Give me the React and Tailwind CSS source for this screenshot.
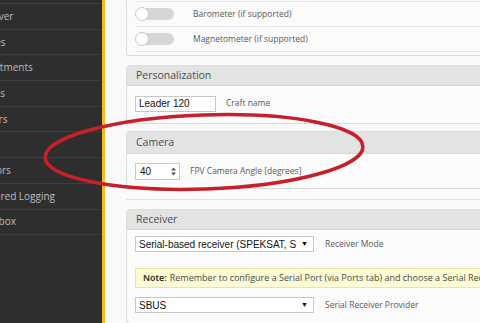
import React from 'react';

const tabs = ['Receiver', 'Modes', 'Adjustments', 'Servos', 'Motors', 'OSD', 'Sensors', 'Tethered Logging', 'Blackbox'];

function Toggle() {
  return (
    <div className="relative w-[38px] h-[12px] rounded-full bg-[#d6d6d6] shrink-0">
      <div className="absolute left-[-1px] top-[-1px] w-[14px] h-[14px] rounded-full bg-white border border-[#c9c9c9]" />
    </div>
  );
}

function Select({ value }) {
  return (
    <div className="flex items-center w-[179px] h-[16px] border border-[#c8c8c8] bg-white pl-[3px] pr-[5px] overflow-hidden">
      <span className="flex-1 whitespace-nowrap overflow-hidden text-[10px] text-[#111] font-['Liberation_Sans',Arial,sans-serif]">{value}</span>
      <span className="text-[7px] text-black ml-[2px]">▼</span>
    </div>
  );
}

function PanelHeader({ title, h }) {
  return (
    <div className={`${h} flex items-center pl-[9px] bg-[#e3e3e3] border-b border-[#d7d7d7] text-[10.5px] text-[#4d4d4d]`}>
      {title}
    </div>
  );
}

export default function App() {
  return (
    <div className="relative w-[480px] h-[323px] overflow-hidden flex bg-[#fafafa] font-['Open_Sans',sans-serif]">
      {/* sidebar, cut off at the left edge */}
      <nav className="w-[105px] h-full bg-[#2e2e2e] border-r-[3px] border-[#f6b928] overflow-hidden pt-[3px] shrink-0">
        <div className="border-t border-[#3f3f3f]">
          {tabs.map((t) => (
            <div key={t} className="h-[25.7px] flex items-center border-b border-[#3f3f3f]">
              <span className="ml-[-26px] whitespace-nowrap text-[10px] text-[#bdbdbd]">{t}</span>
            </div>
          ))}
        </div>
      </nav>

      <main className="flex-1 overflow-hidden pl-[21px]">
        <div className="w-[400px]">
          {/* sensors panel (top cut off) */}
          <div className="border-x border-b border-[#dcdcdc] rounded-b-[3px] bg-[#fbfbfb] pb-[3px]">
            <div className="ml-[9px] border-t border-[#e6e6e6] mt-[1px]" />
            {['Barometer (if supported)', 'Magnetometer (if supported)'].map((l) => (
              <div key={l} className="ml-[9px] h-[25px] flex items-center border-b border-[#e6e6e6]">
                <Toggle />
                <span className="ml-[19px] text-[8.5px] text-[#5a5a5a]">{l}</span>
              </div>
            ))}
          </div>

          {/* personalization */}
          <div className="mt-[9px] border border-[#dcdcdc] rounded-[3px] bg-[#fbfbfb] overflow-hidden">
            <PanelHeader title="Personalization" h="h-[20px]" />
            <div className="h-[37px] flex items-center pl-[8px] pb-[2px]">
              <div className="w-[81px] h-[16px] border border-[#c8c8c8] bg-white pl-[3px] flex items-center text-[10px] text-[#111] font-['Liberation_Sans',Arial,sans-serif]">
                Leader 120
              </div>
              <span className="ml-[10px] text-[8.5px] text-[#5a5a5a]">Craft name</span>
            </div>
          </div>

          {/* camera */}
          <div className="mt-[7px] border border-[#dcdcdc] rounded-[3px] bg-[#fbfbfb] overflow-hidden">
            <PanelHeader title="Camera" h="h-[22px]" />
            <div className="h-[34px] flex items-center pl-[8px]">
              <div className="w-[45px] h-[17px] border border-[#c8c8c8] bg-white pl-[4px] pr-[2px] flex items-center justify-between text-[10px] text-[#111] font-['Liberation_Sans',Arial,sans-serif]">
                <span>40</span>
                <svg width="7" height="11" viewBox="0 0 7 11">
                  <path d="M1 4.5 L3.5 1.5 L6 4.5 Z" fill="#555" />
                  <path d="M1 6.5 L3.5 9.5 L6 6.5 Z" fill="#555" />
                </svg>
              </div>
              <span className="ml-[10px] text-[8.5px] text-[#5a5a5a]">FPV Camera Angle [degrees]</span>
            </div>
          </div>

          <div className="mt-[10px] border-t border-[#e3e3e3]" />

          {/* receiver */}
          <div className="mt-[9px] border border-[#dcdcdc] rounded-[3px] bg-[#fbfbfb] overflow-hidden">
            <PanelHeader title="Receiver" h="h-[20px]" />
            <div className="pl-[8px] pt-[6px] pb-[10px]">
              <div className="flex items-center">
                <Select value="Serial-based receiver (SPEKSAT, S" />
                <span className="ml-[11px] text-[8.5px] text-[#5a5a5a]">Receiver Mode</span>
              </div>
              <div className="mt-[16px] h-[20px] flex items-center bg-[#fcfbd3] border border-[#ece59c] pl-[7px] whitespace-nowrap text-[9px] text-[#4a4a4a]">
                <b className="font-semibold text-[#222]">Note:</b>
                <span className="ml-[3px]">Remember to configure a Serial Port (via Ports tab) and choose a Serial Receiver</span>
              </div>
              <div className="mt-[9px] flex items-center">
                <Select value="SBUS" />
                <span className="ml-[11px] text-[8.5px] text-[#5a5a5a]">Serial Receiver Provider</span>
              </div>
            </div>
          </div>
        </div>
      </main>

      {/* red annotation */}
      <svg className="absolute inset-0 pointer-events-none" width="480" height="323">
        <ellipse cx="204" cy="152" rx="159" ry="37" fill="none" stroke="#c6202a" strokeWidth="3.5" transform="rotate(-2 204 152)" />
      </svg>
    </div>
  );
}
